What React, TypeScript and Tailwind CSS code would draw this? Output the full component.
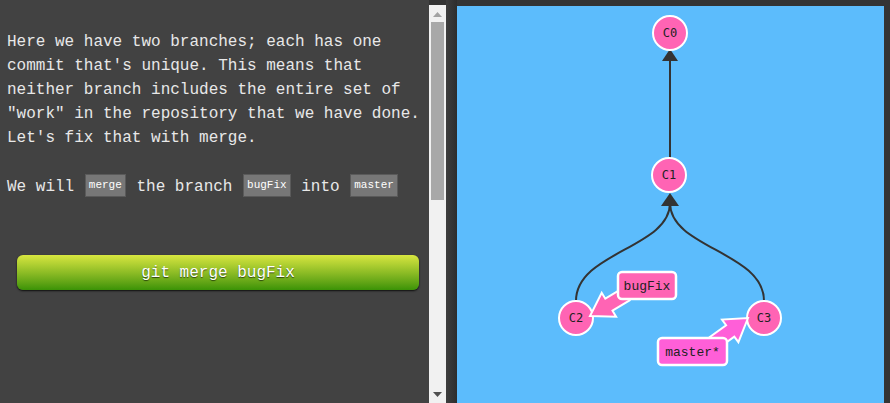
import React from "react";

const mono = { fontFamily: '"Liberation Mono", "Courier New", monospace' };

function Code({ children }: { children: React.ReactNode }) {
  return (
    <span className="inline-block mx-px px-[3px] bg-[#777777] border border-[#5a5a5a] text-white text-[11px] leading-[21px] align-[3px]">
      {children}
    </span>
  );
}

function Commit({ x, y, label }: { x: number; y: number; label: string }) {
  return (
    <g>
      <circle cx={x} cy={y} r={17} fill="#ff64b4" stroke="#ffffff" strokeWidth={2} />
      <text
        x={x}
        y={y + 4}
        textAnchor="middle"
        fontSize={12}
        fill="#222"
        fontFamily='"DejaVu Sans Mono", monospace'
      >
        {label}
      </text>
    </g>
  );
}

function Branch({ x, y, w, label, fill }: { x: number; y: number; w: number; label: string; fill: string }) {
  return (
    <g>
      <rect x={x} y={y} width={w} height={27} rx={4} fill={fill} stroke="#ffffff" strokeWidth={2.5} />
      <text
        x={x + w / 2}
        y={y + 18}
        textAnchor="middle"
        fontSize={13}
        fill="#222"
        fontFamily='"Liberation Mono", "Courier New", monospace'
      >
        {label}
      </text>
    </g>
  );
}

export default function App() {
  return (
    <div className="flex h-[403px] w-[890px] overflow-hidden bg-[#343434]">
      {/* Instructions */}
      <div className="w-[429px] shrink-0 bg-[#424242] pt-[30px] pl-[7px] pr-[2px] text-[#e8e8e8] text-[16px] leading-[24px]" style={mono}>
        <p>
          Here we have two branches; each has one commit that's unique. This means that neither branch includes the
          entire set of "work" in the repository that we have done. Let's fix that with merge.
        </p>
        <p className="mt-[24px]">
          We will <Code>merge</Code> the branch <Code>bugFix</Code> into <Code>master</Code>
        </p>
        <button
          className="mt-[56px] ml-[10px] flex h-[35px] w-[402px] items-center justify-center rounded-[6px] bg-gradient-to-b from-[#d8e640] to-[#3a9306] text-white text-[16px] shadow-[0_1px_2px_rgba(0,0,0,0.8)] [text-shadow:0_1px_1px_rgba(0,0,0,0.6)]"
          style={mono}
        >
          git merge bugFix
        </button>
      </div>

      {/* Scrollbar */}
      <div className="mt-[5px] flex w-[17px] shrink-0 flex-col items-center bg-[#f1f1f1]">
        <svg width="9" height="5" className="mt-[7px]">
          <polygon points="4.5,0 9,5 0,5" fill="#a3a3a3" />
        </svg>
        <div className="mt-[5px] h-[178px] w-[13px] bg-[#a8a8a8]" />
        <div className="flex-1" />
        <svg width="9" height="5" className="mb-[6px]">
          <polygon points="0,0 9,0 4.5,5" fill="#505050" />
        </svg>
      </div>

      <div className="w-[11px] shrink-0 bg-gradient-to-r from-[#3e3e3e] to-[#2d2d2d]" />

      {/* Visualization */}
      <div className="mt-[6px] w-[427px] shrink-0 bg-[#5cbcfc]">
        <svg width="427" height="397" viewBox="457 6 427 397">
          <line x1={670} y1={158} x2={670} y2={58} stroke="#333" strokeWidth={2} />
          <polygon points="670,49 662,61 678,61" fill="#333" />

          <path d="M576,301 C576,252 670,248 670,203" fill="none" stroke="#333" strokeWidth={2} />
          <path d="M764,301 C764,252 670,248 670,203" fill="none" stroke="#333" strokeWidth={2} />
          <polygon points="670,193 661,206 679,206" fill="#333" />

          <Commit x={670} y={33} label="C0" />
          <Commit x={669} y={175} label="C1" />
          <Commit x={576} y={318} label="C2" />
          <Commit x={764} y={318} label="C3" />

          <polygon
            points="590,316 616.1,316.7 612.5,310.7 629.6,300.4 622.4,288.4 605.3,298.7 601.7,292.7"
            fill="#ff64b4"
            stroke="#ffffff"
            strokeWidth={2}
          />
          <polygon
            points="748,318 738.4,342.2 734.3,336.6 718.1,348.4 709.9,337 726.1,325.2 722,319.6"
            fill="#ff5fd8"
            stroke="#ffffff"
            strokeWidth={2}
          />

          <Branch x={618} y={272} w={58} label="bugFix" fill="#ff64b4" />
          <Branch x={658} y={338} w={69} label="master*" fill="#ff5fd8" />
        </svg>
      </div>
    </div>
  );
}
